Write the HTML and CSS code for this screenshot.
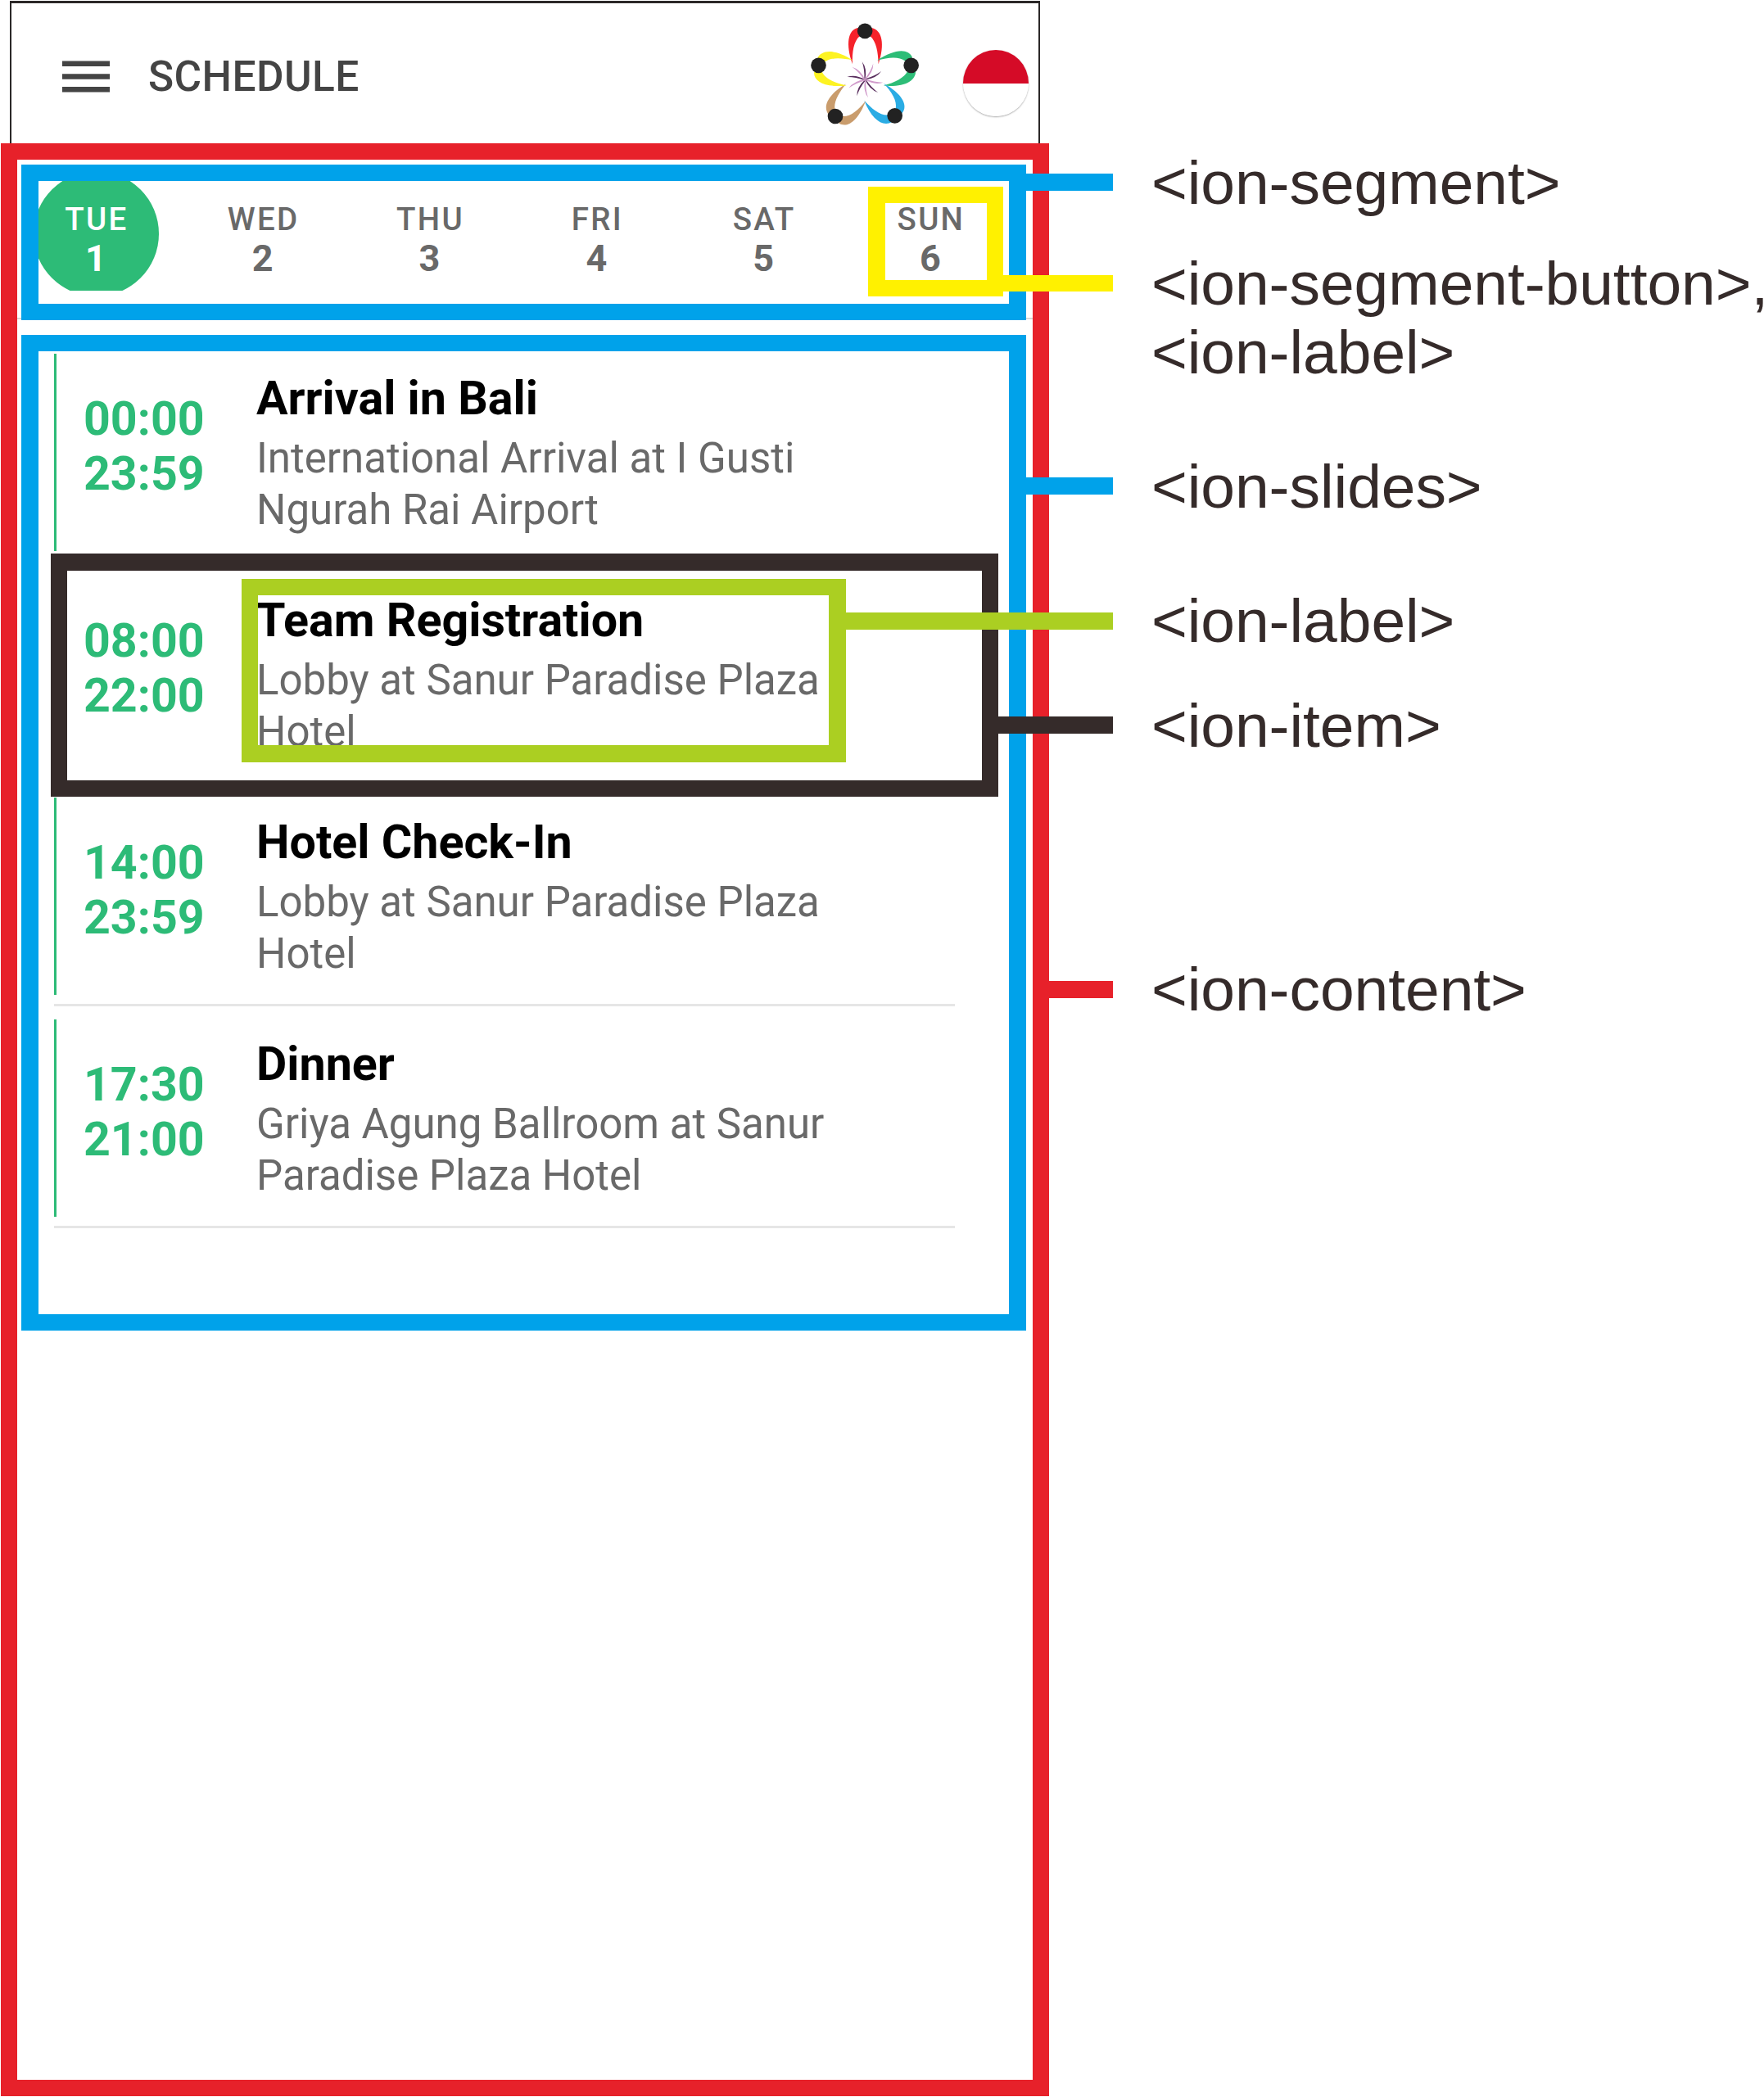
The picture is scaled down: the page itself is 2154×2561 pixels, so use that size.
FILE: index.html
```html
<!DOCTYPE html>
<html lang="en">
<head>
<meta charset="utf-8">
<title>Schedule</title>
<link rel="stylesheet" href="styles.css">
</head>
<body>
<div class="page">
  <div class="phone">
    <header class="toolbar">
      <svg class="menu" viewBox="0 0 58 40"><path d="M0 .5h58v6.5H0zM0 16.2h58v6.5H0zM0 32h58v6.5H0z" fill="#444"/></svg>
      <h1 class="title">SCHEDULE</h1>
      <svg class="logo" viewBox="87 81 402 378">
        <defs>
          <path id="petal" d="M264 102C226 108 217 162 243 235C241 192 247 150 270 132ZM313 102C352 110 362 162 338 235C337 192 330 150 307 132Z"/>
          <path id="ray" d="M289 292Q298 252 278 226Q288 255 286 290Z"/>
        </defs>
        <use href="#petal" fill="#f5222a"/>
        <use href="#petal" fill="#2dbd77" transform="translate(345 267.500) rotate(76) scale(1 .96) translate(-290.500 -235)"/>
        <use href="#petal" fill="#2aace4" transform="translate(321.500 337) rotate(139) scale(1 .95) translate(-290.500 -235)"/>
        <use href="#petal" fill="#c99c6c" transform="translate(255 338.500) rotate(220.600) scale(1 .95) translate(-290.500 -235)"/>
        <use href="#petal" fill="#fdf322" transform="translate(232.500 267) rotate(-76.300) scale(1 .96) translate(-290.500 -235)"/>
        <g fill="#222">
          <circle cx="288.500" cy="113.500" r="28"/>
          <circle cx="458" cy="239.500" r="28"/>
          <circle cx="398" cy="424" r="28"/>
          <circle cx="180" cy="426" r="28"/>
          <circle cx="118.500" cy="239.500" r="28"/>
        </g>
        <g fill="#5a2f5e">
          <use href="#ray"/>
          <use href="#ray" transform="rotate(72 289 292)"/>
          <use href="#ray" transform="rotate(144 289 292)"/>
          <use href="#ray" transform="rotate(216 289 292)"/>
          <use href="#ray" transform="rotate(288 289 292)"/>
        </g>
        <g fill="#d19bcb">
          <use href="#ray" transform="rotate(36 289 292)"/>
          <use href="#ray" transform="rotate(108 289 292)"/>
          <use href="#ray" transform="rotate(180 289 292)"/>
          <use href="#ray" transform="rotate(252 289 292)"/>
          <use href="#ray" transform="rotate(324 289 292)"/>
        </g>
      </svg>
      <span class="flag"></span>
    </header>
    <main class="content">
      <div class="days">
        <nav class="segment">
          <button class="day active"><span>TUE</span><b>1</b></button>
          <button class="day"><span>WED</span><b>2</b></button>
          <button class="day"><span>THU</span><b>3</b></button>
          <button class="day"><span>FRI</span><b>4</b></button>
          <button class="day"><span>SAT</span><b>5</b></button>
          <button class="day"><span>SUN</span><b>6</b></button>
        </nav>
      </div>
      <section class="slides">
        <article class="item">
          <div class="time">00:00<br>23:59</div>
          <div class="label"><h2>Arrival in Bali</h2><p>International Arrival at I Gusti Ngurah Rai Airport</p></div>
        </article>
        <article class="item">
          <div class="time">08:00<br>22:00</div>
          <div class="label"><h2>Team Registration</h2><p>Lobby at Sanur Paradise Plaza Hotel</p></div>
        </article>
        <article class="item">
          <div class="time">14:00<br>23:59</div>
          <div class="label"><h2>Hotel Check-In</h2><p>Lobby at Sanur Paradise Plaza Hotel</p></div>
        </article>
        <article class="item">
          <div class="time">17:30<br>21:00</div>
          <div class="label"><h2>Dinner</h2><p>Griya Agung Ballroom at Sanur Paradise Plaza Hotel</p></div>
        </article>
      </section>
    </main>
  </div>
  <aside class="notes">
    <p class="note-segment">&lt;ion-segment&gt;</p>
    <p class="note-button">&lt;ion-segment-button&gt;,<br>&lt;ion-label&gt;</p>
    <p class="note-slides">&lt;ion-slides&gt;</p>
    <p class="note-label">&lt;ion-label&gt;</p>
    <p class="note-item">&lt;ion-item&gt;</p>
    <p class="note-content">&lt;ion-content&gt;</p>
  </aside>
  <i class="frame frame-button"></i>
  <i class="frame frame-item"></i>
  <i class="frame frame-label"></i>
  <i class="line line-segment"></i>
  <i class="line line-button"></i>
  <i class="line line-slides"></i>
  <i class="line line-label"></i>
  <i class="line line-item"></i>
  <i class="line line-content"></i>
</div>
</body>
</html>
```

FILE: styles.css
```css
* { box-sizing: border-box; }

body {
  margin: 0;
  background: #fff;
  font-family: Roboto, "Liberation Sans", sans-serif;
}

h1, h2, p { margin: 0; }

.page {
  position: relative;
  display: flex;
  width: 2154px;
  height: 2561px;
  overflow: hidden;
}

.phone {
  display: flex;
  flex: none;
  flex-direction: column;
  width: 1280px;
  margin-left: 1px;
  padding-top: 1px;
}

/* App toolbar */
.toolbar {
  display: flex;
  align-items: flex-start;
  flex: none;
  height: 174px;
  width: 1258px;
  margin-left: 11px;
  border: solid #2b2828;
  border-width: 3px 2px 0;
}

.menu {
  width: 58px;
  height: 40px;
  margin: 70px 0 0 62px;
}

.title {
  margin: 59px 0 0 47px;
  color: #444;
  font-size: 51.400px;
  font-weight: 500;
  line-height: 62px;
  letter-spacing: .450px;
}

.logo {
  width: 134px;
  height: 126px;
  margin: 23px 0 0 auto;
  overflow: visible;
}

.flag {
  width: 80px;
  height: 81px;
  margin: 57px 12px 0 53px;
  border-radius: 50%;
  background: linear-gradient(#d50b27 50%, #fff 50%);
  box-shadow: 0 1px 2px rgba(0, 0, 0, .35);
}

/* Scrolling content */
.content {
  flex: none;
  height: 2385px;
  border: 20px solid #e7212a;
}

.days {
  height: 195px;
  padding: 6px 8px 0 5px;
  border-bottom: 2px solid #d9d9d9;
}

.segment {
  position: relative;
  display: grid;
  grid-template-columns: repeat(6, 203.800px);
  align-items: start;
  width: 1227px;
  height: 190px;
  border: solid #00a2ea;
  border-width: 20px 21px;
  overflow: hidden;
}

.day {
  position: relative;
  display: flex;
  flex-direction: column;
  align-items: center;
  height: 134px;
  margin-left: -32px;
  margin-right: 32px;
  padding: 24px 0 0;
  border: 0;
  background: none;
  color: #696969;
  font-family: inherit;
  overflow: hidden;
}

.day span {
  position: relative;
  padding-left: 2px;
  font-size: 38.500px;
  font-weight: 500;
  line-height: 46px;
  letter-spacing: 2.300px;
}

.day b {
  position: relative;
  font-size: 45px;
  font-weight: 700;
  line-height: 50px;
}

.active { color: #fff; }

.active::before {
  content: "";
  position: absolute;
  left: 26px;
  top: -12px;
  width: 153px;
  height: 153px;
  border-radius: 50%;
  background: #2dbb77;
}

.slides {
  width: 1227px;
  height: 1216px;
  margin: 19px 0 0 5px;
  padding: 3px 0 0 19px;
  border: solid #00a2ea;
  border-width: 20px 21px;
}

.item {
  display: flex;
  align-items: flex-start;
  width: 1100px;
  height: 255px;
  margin-bottom: 16px;
  border-bottom: 3px solid #e6e6e6;
}

.time {
  width: 247px;
  height: 241px;
  padding: 46px 0 0 33px;
  border-left: 3px solid #2dbb77;
  color: #2dbb77;
  font-size: 57.300px;
  font-weight: 700;
  line-height: 67px;
}

.label {
  width: 720px;
  padding-top: 21px;
}

.label h2 {
  color: #000;
  font-size: 57.400px;
  font-weight: 700;
  line-height: 68px;
}

.label p {
  margin-top: 7px;
  color: #696969;
  font-size: 51px;
  line-height: 63px;
}

/* Component names beside the phone */
.notes {
  margin-left: 125px;
  padding-top: 181px;
  color: #352b2a;
  font-family: "Liberation Sans", Arial, sans-serif;
  font-size: 75px;
  line-height: 84px;
  letter-spacing: -.070px;
  white-space: nowrap;
}

.note-button { margin-top: 39px; }
.note-slides { margin-top: 80px; }
.note-label { margin-top: 80px; }
.note-item { margin-top: 44px; }
.note-content { margin-top: 238px; }

/* Frames and leader lines drawn over the screen */
.frame, .line { position: absolute; }

.frame { border: 21px solid; }

.frame-button {
  left: 1060px;
  top: 228px;
  width: 165px;
  height: 134px;
  border-width: 20px 20px 20px 21px;
  border-color: #fff100;
}

.frame-item {
  left: 62px;
  top: 676px;
  width: 1157px;
  height: 297px;
  border-width: 21px 20px 20px 20px;
  border-color: #352b2a;
}

.frame-label {
  left: 295px;
  top: 707px;
  width: 738px;
  height: 224px;
  border-width: 20px 21px 21px 20px;
  border-color: #abcf22;
}

.line {
  right: 795px;
  height: 21px;
}

.line-segment { top: 212px; width: 106px; background: #00a2ea; }
.line-button { top: 336px; width: 134px; height: 20px; background: #fff100; }
.line-slides { top: 583px; width: 106px; background: #00a2ea; }
.line-label { top: 748px; width: 326px; background: #abcf22; }
.line-item { top: 875px; width: 140px; background: #352b2a; }
.line-content { top: 1198px; width: 78px; background: #e7212a; }
```
